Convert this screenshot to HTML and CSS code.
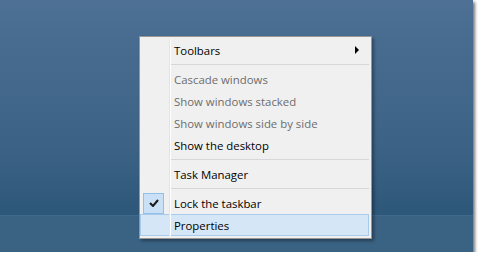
FILE: index.html
```html
<!DOCTYPE html>
<html lang="en">
<head>
    <meta charset="UTF-8">
    <title>Taskbar menu</title>
    <link rel="stylesheet" href="styles.css">
</head>
<body>
    <div class="desktop">
        <div class="taskbar"></div>

        <div class="menu">
            <div class="item">
                <span class="gutter"></span>
                <span class="label">Toolbars</span>
                <span class="arrow"></span>
            </div>
            <div class="sep"><span class="gutter"></span><span class="line"></span></div>
            <div class="item disabled"><span class="gutter"></span><span class="label">Cascade windows</span></div>
            <div class="item disabled"><span class="gutter"></span><span class="label">Show windows stacked</span></div>
            <div class="item disabled"><span class="gutter"></span><span class="label">Show windows side by side</span></div>
            <div class="item"><span class="gutter"></span><span class="label">Show the desktop</span></div>
            <div class="sep"><span class="gutter"></span><span class="line"></span></div>
            <div class="item"><span class="gutter"></span><span class="label">Task Manager</span></div>
            <div class="sep"><span class="gutter"></span><span class="line"></span></div>
            <div class="item">
                <span class="gutter">
                    <span class="check">
                        <svg width="10" height="8" viewBox="0 0 10 8">
                            <path d="M1 4 L4 7 L9 1" fill="none" stroke="#1a1a1a" stroke-width="2"/>
                        </svg>
                    </span>
                </span>
                <span class="label">Lock the taskbar</span>
            </div>
            <div class="item hover"><span class="gutter"></span><span class="label">Properties</span></div>
        </div>
    </div>
</body>
</html>
```

FILE: styles.css
```css
* {
    margin: 0;
    padding: 0;
    box-sizing: border-box;
}

body {
    background-color: #ffffff;
    font-family: "Open Sans", "Liberation Sans", sans-serif;
}

.desktop {
    position: relative;
    width: 473px;
    height: 252px;
    display: flex;
    flex-direction: column;
    background: linear-gradient(#4d7094, #3b6285 60%, #2e587a 83%);
    box-shadow: 2px 2px 3px rgba(0, 0, 0, 0.55);
}

.taskbar {
    margin-top: auto;
    height: 37px;
    background-color: #3a6283;
    border-top: 1px solid #41688a;
}

/* Context menu */
.menu {
    position: absolute;
    left: 139px;
    top: 36px;
    width: 233px;
    padding: 2px 2px 2px 0;
    background-color: #f0f0f0;
    border: 1px solid #979797;
    box-shadow: 2px 2px 3px rgba(0, 0, 0, 0.35);
    font-size: 11.4px;
    color: #000000;
}

.item {
    display: flex;
    align-items: center;
    height: 22px;
}

.gutter {
    display: flex;
    align-self: stretch;
    align-items: center;
    width: 30px;
    flex-shrink: 0;
    border-right: 1px solid #e2e3e3;
    box-shadow: 1px 0 0 #ffffff;
}

.label {
    padding-left: 4px;
    white-space: nowrap;
}

.disabled {
    color: #6d6d6d;
}

.arrow {
    margin-left: auto;
    margin-right: 10px;
    width: 0;
    height: 0;
    border-left: 4px solid #000000;
    border-top: 4px solid transparent;
    border-bottom: 4px solid transparent;
}

.sep {
    display: flex;
    align-items: center;
    height: 7px;
}

.sep .gutter {
    align-self: stretch;
}

.sep .line {
    flex: 1;
    height: 1px;
    margin-left: 1px;
    background-color: #d7d7d7;
}

.check {
    display: flex;
    align-items: center;
    justify-content: center;
    width: 21px;
    height: 21px;
    margin-left: 3px;
    background-color: #c9e0f7;
    border: 1px solid #92c0e8;
}

.hover {
    background-color: #d5e6f7;
    box-shadow: inset 0 0 0 1px #a8cbec;
}
```
